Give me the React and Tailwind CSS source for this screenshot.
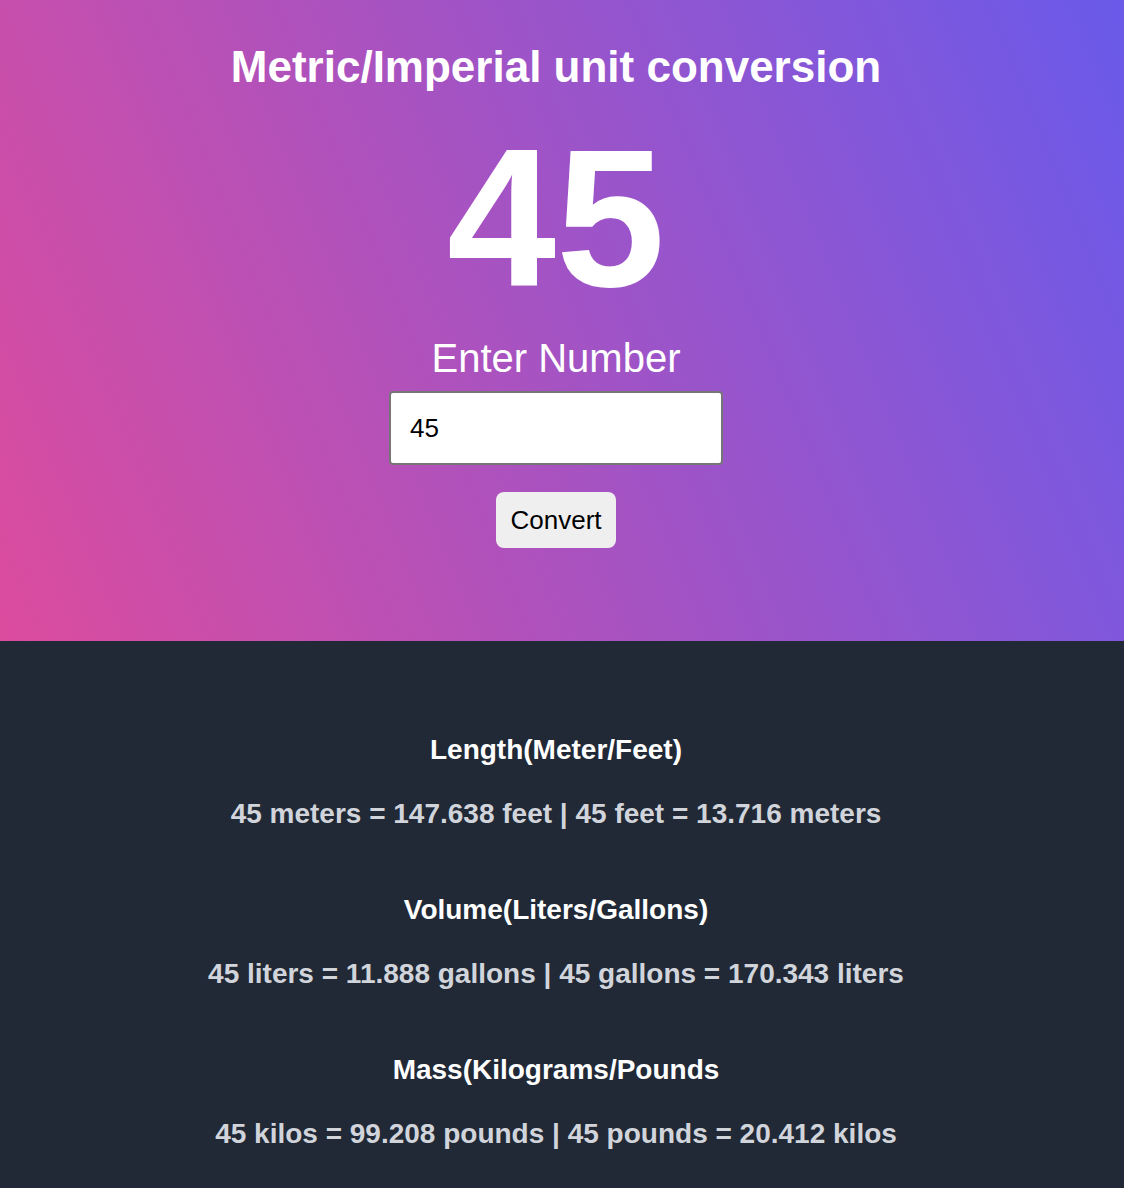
import { useState } from 'react';

const fmt = (n) => n.toFixed(3);

const App = () => {
    const [input, setInput] = useState('45');
    const [value, setValue] = useState(45);

    const rows = [
        {
            title: 'Length(Meter/Feet)',
            text: `${value} meters = ${fmt(value * 3.28084)} feet | ${value} feet = ${fmt(value / 3.28084)} meters`,
        },
        {
            title: 'Volume(Liters/Gallons)',
            text: `${value} liters = ${fmt(value * 0.264172)} gallons | ${value} gallons = ${fmt(value * 3.78541)} liters`,
        },
        {
            title: 'Mass(Kilograms/Pounds',
            text: `${value} kilos = ${fmt(value * 2.20462)} pounds | ${value} pounds = ${fmt(value * 0.453592)} kilos`,
        },
    ];

    return (
        <div className="min-h-screen bg-[#212936] font-['Liberation_Sans',Arial,sans-serif]">
            {/* Hero */}
            <div className="h-[641px] bg-[linear-gradient(68deg,#dc4c9e,#6a5aea)] flex flex-col items-center pt-[41px] pr-[12px] text-white">
                <h1 className="text-[44px] leading-[52px] font-bold">Metric/Imperial unit conversion</h1>
                <div className="mt-[26px] text-[196px] leading-[200px] font-bold">{value}</div>
                <label className="mt-[15px] text-[40px] leading-[48px]">Enter Number</label>
                <input
                    type="text"
                    value={input}
                    onChange={(e) => setInput(e.target.value)}
                    className="mt-[9px] w-[334px] h-[74px] bg-white border-2 border-[#767676] rounded-[4px] pl-[19px] text-[26px] text-black outline-none"
                />
                <button
                    onClick={() => setValue(Number(input) || 0)}
                    className="mt-[27px] w-[120px] h-[56px] bg-[#efefef] rounded-lg text-[26px] text-black"
                >
                    Convert
                </button>
            </div>

            {/* Results */}
            <div className="flex flex-col items-center gap-[64px] pt-[93px] pb-[40px] pr-[12px]">
                {rows.map((row) => (
                    <div key={row.title} className="flex flex-col items-center gap-[32px]">
                        <h3 className="text-[28px] leading-[32px] font-bold text-white">{row.title}</h3>
                        <p className="text-[28px] leading-[32px] font-bold text-[#d1d5db]">{row.text}</p>
                    </div>
                ))}
            </div>
        </div>
    );
};

export default App;
